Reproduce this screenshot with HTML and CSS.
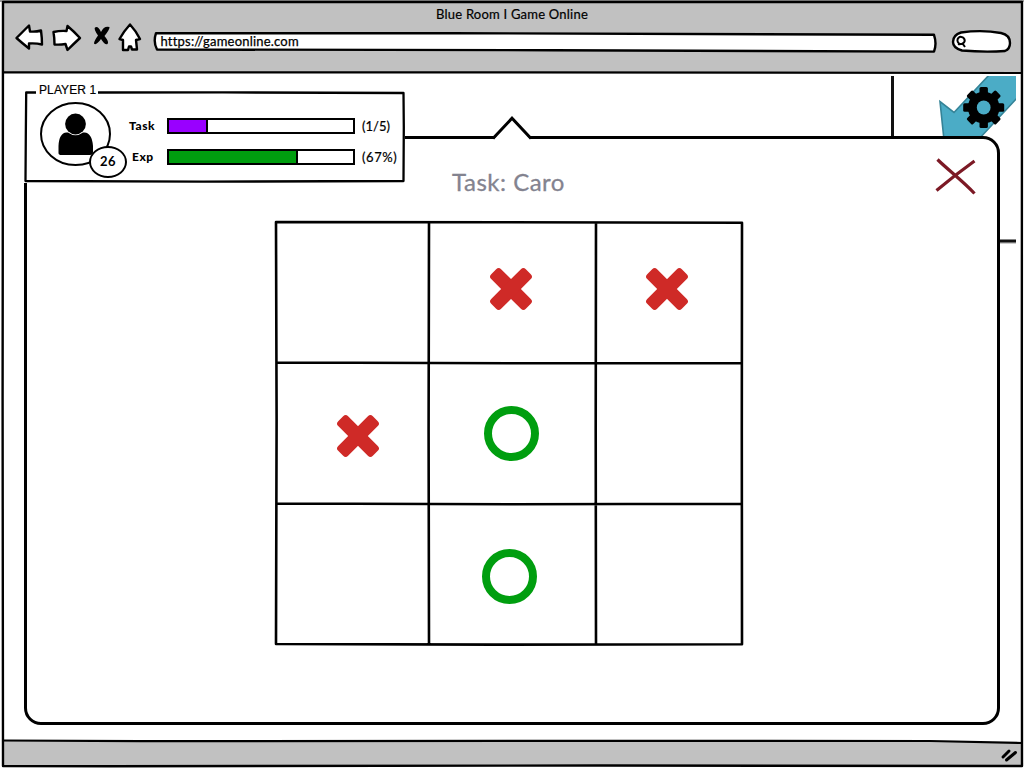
FILE: index.html
```html
<!DOCTYPE html>
<html lang="en">
<head>
<meta charset="utf-8">
<title>Blue Room I Game Online</title>
<link rel="stylesheet" href="styles.css">
</head>
<body>
<div class="window">
  <svg class="window-frame" viewBox="0 0 1024 768" aria-hidden="true">
    <path class="chrome-fill" d="M3 2H1022V72.5H3Z M3 740.5L300 741 930 741 1022 743V766H3Z"/>
    <path class="frame-line" d="M3 2H1022L1021.8 400 1022 766 600 765.5 110 766.3 3 766 2.6 400Z"/>
    <path class="frame-line thin" d="M3 72.300H500L1022 73 M3 740.500L140 741.200 600 740.800 930 741 1022 743"/>
  </svg>

  <header class="chrome">
    <h1 class="window-title">Blue Room I Game Online</h1>
    <nav class="toolbar">
      <svg class="nav-icons" viewBox="0 0 134 32" aria-hidden="true">
        <path class="sketch" d="M2.500 17L15 4.500 16 10.500 Q22 11 27 9.500 Q28 17 28 23.500 Q22 22 15 22.500V27.500Q8 22 2.500 17Z"/>
        <path class="sketch" d="M39.500 11Q46 9.500 52.500 10L53.500 5Q59.500 10 66 17Q59.500 23 53.500 29L51.500 23Q46 24 40.500 23.500Q40.500 17 39.500 11Z"/>
        <path class="stop" d="M81 6.500Q84 4.500 87 11Q90 4.500 95.500 6Q96 8 90.500 15Q95.500 21 93.500 23Q91 24.500 87 18Q82 25 80 22.500Q80 20 84 14.500Q79.500 8 81 6.500Z"/>
        <path class="sketch" d="M116 3.500Q122 10 126 18L122 19 123 28.500H118L117 25.500H115L114 29H109V19L105.500 18Q110 10 116 3.500Z"/>
      </svg>
      <div class="address">
        <svg class="address-shape" viewBox="0 0 784 22" aria-hidden="true"><path class="sketch" d="M3 2.200L300 2.200 781 3.800Q784 13 781 20.600L400 19.200 4 18.500Q0 11 3 2.200Z"/></svg>
        <span class="url">https://gameonline.com</span>
      </div>
      <svg class="search" viewBox="0 0 60 24" aria-hidden="true">
        <path class="sketch" d="M10 3.500Q31 .5 50 4Q59 6 59 14Q59 20 54 22Q34 23.500 11 21.500Q2 19 2 13Q2 6 10 3.500Z"/>
        <path class="lens" d="M13 13.500A3.600 3.600 0 1 1 12.900 9.300A3.600 3.600 0 0 1 13 13.500Q10 16 7 15M11.500 14.500L14 18"/>
      </svg>
    </nav>
  </header>

  <main class="page">
    <svg class="scene" viewBox="0 0 126 168" aria-hidden="true">
      <path class="scene-shadow" d="M108 167.500H126"/>
      <path class="scene-line" d="M2.500 0V70M106 165H126"/>
      <path class="arrow" d="M127 -2H100L64 36.500 50 25.500 54 64H88L127 22Z"/>
      <g transform="translate(93.700 31.500)">
        <g id="teeth"><rect x="-4.200" y="-20.500" width="8.400" height="41" rx="1.500"/><rect x="-20.500" y="-4.200" width="41" height="8.400" rx="1.500"/></g>
        <use href="#teeth" transform="rotate(45)"/>
        <circle r="15.800"/><circle class="gear-hole" r="6.900"/>
      </g>
    </svg>

    <section class="dialog">
      <h2 class="dialog-title">Task: Caro</h2>
      <svg class="close" viewBox="0 0 42 38" role="img" aria-label="Close"><path d="M2.500 1.500C12 11 28 23 39.500 35.500M39.500 3Q20 17 1.500 32.500"/></svg>
      <div class="board">
        <div class="cell"></div>
        <div class="cell"><svg class="mark x-top" viewBox="0 0 44 44"><use href="#cross"/></svg></div>
        <div class="cell"><svg class="mark x-right" viewBox="0 0 44 44"><use href="#cross"/></svg></div>
        <div class="cell"><svg class="mark x-left" viewBox="0 0 44 44"><g id="cross" class="cross" transform="rotate(45 22 22)"><rect x="-2.500" y="15" width="49" height="14" rx="3.500"/><rect x="15" y="-2.500" width="14" height="49" rx="3.500"/></g></svg></div>
        <div class="cell"><span class="ring ring-mid"></span></div>
        <div class="cell"></div>
        <div class="cell"></div>
        <div class="cell"><span class="ring ring-low"></span></div>
        <div class="cell"></div>
        <svg class="board-lines" viewBox="0 0 470 426" aria-hidden="true">
          <path d="M2 2L230 2.200 468 2.700 467.800 210 468 424.300 220 424.600 2 424 2.600 200ZM2 142.500L240 143.200 468 143M2 283.500L240 284.200 468 283.800M155 2L154.600 210 155 424M322 2L321.700 210 322 424"/>
        </svg>
      </div>
    </section>
    <svg class="pointer" viewBox="0 0 40 24" aria-hidden="true"><path class="pointer-fill" d="M2 24V22L20 2 38 22V24Z"/><path d="M1 21.500L20 1.200 39 21.500"/></svg>

    <aside class="player">
      <svg class="player-frame" viewBox="0 0 382 96" aria-hidden="true"><path class="player-fill" d="M0 4H382V96H0Z"/><path d="M13 5.500H3.200L2.800 50 2.500 94 180 94.700 380.500 94 380.800 40 380.500 6 200 5.400 75 5.500"/></svg>
      <div class="player-name">PLAYER 1</div>
      <div class="avatar">
        <svg class="person" viewBox="0 0 72 65" aria-hidden="true">
          <ellipse class="avatar-ring" cx="35.500" cy="33" rx="34.500" ry="31"/>
          <path d="M18.500 52V45Q19 32 26.500 31.500H28Q35.500 37 43 31.500H44.500Q52 32 53 45V51Q53 54 50 54H21.500Q18.500 54 18.500 52Z"/>
          <circle cx="35.500" cy="23" r="10.400"/>
        </svg>
        <span class="level">26</span>
      </div>
      <div class="stats">
        <div class="stat"><span class="stat-label task-label">Task</span><span class="bar"><i class="fill violet"></i></span><span class="value task-value">(1/5)</span></div>
        <div class="stat"><span class="stat-label exp-label">Exp</span><span class="bar"><i class="fill green"></i></span><span class="value exp-value">(67%)</span></div>
      </div>
    </aside>
  </main>

  <footer class="status"><svg class="grip" viewBox="0 0 18 14" aria-hidden="true"><path d="M3 9L9 3M6.500 12L15.500 4.500"/></svg></footer>
</div>
</body>
</html>
```
FILE: styles.css
```css
* { box-sizing: border-box; }
body { margin: 0; background: #878787; color: #000; font-family: Lato, "Noto Sans", sans-serif; }
svg { display: block; fill: #000; overflow: visible; }
h1, h2 { margin: 0; font-weight: 400; }
.window { position: relative; isolation: isolate; display: flex; flex-direction: column; width: 1024px; height: 768px; overflow: hidden; }
.window-frame { position: absolute; inset: 0; z-index: -1; width: 1024px; height: 768px; background: linear-gradient(#999 0 2px, #fff 2px); }
.chrome-fill { fill: #c1c1c1; }
.frame-line { fill: none; stroke: #000; stroke-width: 2.4; stroke-linejoin: round; }
.thin { stroke-width: 2.2; }
.sketch { fill: #fff; stroke: #000; stroke-width: 2.4; stroke-linejoin: round; }

.chrome { height: 74px; display: flex; flex-direction: column; }
.window-title { height: 21px; padding-top: 6px; text-align: center; font-size: 13px; line-height: 17px; letter-spacing: .22px; -webkit-text-stroke: .2px #000; }
.toolbar { display: flex; padding: 0 13px 0 14px; }
.nav-icons { width: 134px; height: 32px; }
.address { display: grid; width: 784px; margin: 9.500px 14px 0 5px; height: 22px; }
.address-shape, .url { grid-area: 1 / 1; }
.address-shape { width: 784px; height: 22px; }
.url { z-index: 1; padding-left: 7.500px; font-size: 13px; line-height: 21px; letter-spacing: .2px; -webkit-text-stroke: .25px #000; }
.search { width: 60px; height: 24px; margin-top: 8px; }
.lens { fill: none; stroke: #000; stroke-width: 2; }

.page { position: relative; flex: 1; }
.scene { position: absolute; left: 890px; top: 2px; width: 126px; height: 168px; overflow: hidden; }
.scene-line { stroke: #111; stroke-width: 3; }
.scene-shadow { stroke: #ccc; stroke-width: 3; }
.arrow { fill: #4bacc6; stroke: #348397; stroke-width: 1.6; }
.gear-hole { fill: #4bacc6; }

.dialog { position: absolute; left: 24px; top: 62px; width: 976px; height: 589px; background: #fff; border: 3px solid #000; border-radius: 17px; }
.dialog-title { margin-left: -3px; padding: 28px 4px 0 0; height: 83px; text-align: center; font-size: 24px; line-height: 29px; letter-spacing: .5px; color: #83838f; -webkit-text-stroke: .3px #83838f; }
.close { position: absolute; right: 20px; top: 19px; width: 42px; height: 38px; }
.close path { fill: none; stroke: #7c1925; stroke-width: 3.2; }
.board { position: relative; display: grid; grid-template-columns: 153px 167px 146px; grid-template-rows: 141px 141px 141px; width: 466px; margin-left: 248.500px; }
.cell { display: flex; align-items: center; justify-content: center; }
.board-lines { position: absolute; left: -2px; top: -2px; width: 470px; height: 426px; }
.board-lines path { fill: none; stroke: #000; stroke-width: 2.6; stroke-linejoin: round; }
.mark { width: 44px; height: 44px; }
.cross { fill: #cf2a27; }
.x-top { margin: 0 2px 7px 0; }
.x-right { margin: 0 4px 7px 0; }
.x-left { margin: 5px 0 0 11px; }
.ring { width: 55px; height: 55px; border: 8px solid #009e0f; border-radius: 50%; }
.ring-mid { margin-right: 1px; }
.ring-low { margin: 4px 5px 0 0; }
.pointer { position: absolute; left: 492px; top: 43px; width: 40px; height: 24px; }
.pointer path { fill: none; stroke: #000; stroke-width: 3; }
.pointer .pointer-fill { fill: #fff; stroke: none; }

.player { position: absolute; isolation: isolate; left: 23px; top: 13px; width: 382px; height: 96px; display: flex; }
.player-frame { position: absolute; inset: 0; width: 382px; height: 96px; z-index: -1; }
.player-frame path { fill: none; stroke: #000; stroke-width: 2.3; stroke-linejoin: round; }
.player-frame .player-fill { fill: #fff; stroke: none; }
.player-name { position: absolute; left: 13px; top: -5px; width: 62px; padding-left: 3px; background: #fff; font: 12px/16px "Liberation Sans", sans-serif; letter-spacing: .1px; white-space: nowrap; -webkit-text-stroke: .2px #000; }
.avatar { position: relative; width: 72px; height: 65px; margin: 14px 0 0 17px; }
.person { width: 72px; height: 65px; }
.avatar-ring { fill: #fff; stroke: #000; stroke-width: 2; }
.level { position: absolute; left: 49px; top: 44.500px; width: 38px; height: 32px; border: 2px solid #000; border-radius: 50%; background: #fff; text-align: center; font-size: 13px; line-height: 27px; font-weight: 700; letter-spacing: .5px; }
.stats { display: flex; flex-direction: column; gap: 15px; padding: 31px 0 0 17px; }
.stat { display: flex; align-items: center; height: 16px; }
.stat-label { width: 38px; font-size: 12px; font-weight: 900; line-height: 16px; letter-spacing: .55px; }
.exp-label { padding-left: 3px; }
.bar { width: 188px; height: 16px; border: 2px solid #000; background: #fff; }
.fill { display: block; height: 12px; border-right: 2px solid #000; }
.violet { width: 39px; background: #9900ff; }
.green { width: 129px; background: #009e0f; }
.value { margin-left: 7px; font-size: 13px; line-height: 16px; white-space: nowrap; -webkit-text-stroke: .2px #000; }
.exp-value { letter-spacing: .6px; }

.status { display: flex; justify-content: flex-end; height: 28px; padding: 8px 6px 0 0; }
.grip { width: 18px; height: 14px; }
.grip path { fill: none; stroke: #000; stroke-width: 3; stroke-linecap: round; }
```
